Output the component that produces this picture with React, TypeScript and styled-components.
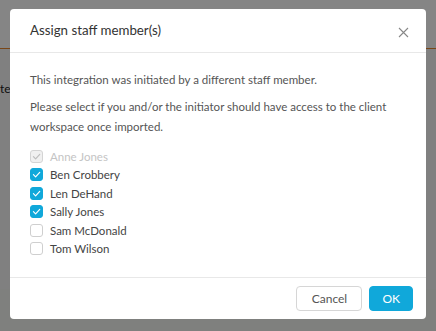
import React, { useState } from "react";
import styled, { createGlobalStyle } from "styled-components";

const Global = createGlobalStyle`
  html, body { margin: 0; padding: 0; }
  body { font-family: Lato, "Noto Sans", sans-serif; background: #fff; width: 436px; height: 331px; overflow: hidden; }
`;

const Page = styled.div`
  position: relative;
  width: 436px;
  height: 331px;
  background: #f6f6f6;
  overflow: hidden;
`;

const PageHeader = styled.div`
  height: 48px;
  background: #fff;
  border-bottom: 1px solid #e8862c;
`;

const PageText = styled.div`
  padding: 32px 0 0 0;
  font-size: 12px;
  color: #222;
`;

const PageFooter = styled.div`
  position: absolute;
  left: 0;
  right: 0;
  bottom: 0;
  height: 42px;
  background: #f4f6f2;
`;

const Overlay = styled.div`
  position: absolute;
  inset: 0;
  background: rgba(0, 0, 0, 0.48);
  display: flex;
  justify-content: center;
  align-items: flex-start;
  padding-top: 9px;
`;

const Modal = styled.div`
  width: 416px;
  background: #fff;
  border-radius: 4px;
  display: flex;
  flex-direction: column;
`;

const Header = styled.div`
  height: 43px;
  display: flex;
  align-items: center;
  justify-content: space-between;
  padding: 0 16px 0 20px;
  border-bottom: 1px solid #e8e8e8;
`;

const Title = styled.h2`
  margin: 0;
  margin-top: -2px;
  font-size: 13.3px;
  font-weight: 400;
  color: #333;
`;

const Close = styled.button`
  border: 0;
  background: none;
  padding: 0;
  margin-top: 4px;
  width: 14px;
  height: 14px;
  display: flex;
  align-items: center;
  justify-content: center;
  cursor: pointer;
`;

const Body = styled.div`
  padding: 17px 20px 19px 20px;
  border-bottom: 1px solid #e8e8e8;
`;

const Para = styled.p<{ $gap?: number }>`
  margin: 0 0 ${(p) => p.$gap ?? 0}px 0;
  font-size: 11.5px;
  line-height: 20px;
  color: #555;
`;

const List = styled.div`
  display: flex;
  flex-direction: column;
  margin-top: 10px;
`;

const Row = styled.label<{ $disabled?: boolean }>`
  display: flex;
  align-items: center;
  gap: 7px;
  height: 18.5px;
  font-size: 11.5px;
  color: ${(p) => (p.$disabled ? "#c4c4c4" : "#444")};
  cursor: ${(p) => (p.$disabled ? "default" : "pointer")};
`;

const Box = styled.span<{ $checked: boolean; $disabled?: boolean }>`
  width: 13px;
  height: 13px;
  box-sizing: border-box;
  border-radius: 3px;
  display: flex;
  align-items: center;
  justify-content: center;
  border: 1px solid
    ${(p) => (p.$disabled ? "#d4d4d4" : p.$checked ? "#10a8da" : "#cfcfcf")};
  background: ${(p) => (p.$disabled ? "#f0f0f0" : p.$checked ? "#10a8da" : "#fff")};
`;

const Footer = styled.div`
  display: flex;
  justify-content: flex-end;
  gap: 7px;
  padding: 8px 13px 8px 20px;
`;

const Btn = styled.button<{ $primary?: boolean }>`
  height: 25px;
  box-sizing: border-box;
  border-radius: 4px;
  font-family: inherit;
  font-size: 12px;
  padding: 0 12px;
  border: 1px solid ${(p) => (p.$primary ? "#10a8da" : "#d6d6d6")};
  background: ${(p) => (p.$primary ? "#10a8da" : "#fff")};
  color: ${(p) => (p.$primary ? "#fff" : "#555")};
  min-width: ${(p) => (p.$primary ? "43px" : "66px")};
`;

const Check = ({ color }: { color: string }) => (
  <svg width="9" height="9" viewBox="0 0 10 10">
    <path d="M1.6 5.2 L4 7.6 L8.6 2.6" fill="none" stroke={color} strokeWidth="1.3" strokeLinecap="round" strokeLinejoin="round" />
  </svg>
);

const people = [
  { name: "Anne Jones", checked: true, disabled: true },
  { name: "Ben Crobbery", checked: true },
  { name: "Len DeHand", checked: true },
  { name: "Sally Jones", checked: true },
  { name: "Sam McDonald", checked: false },
  { name: "Tom Wilson", checked: false },
];

export default function App() {
  const [state, setState] = useState(people);
  const toggle = (i: number) =>
    setState((s) => s.map((p, j) => (j === i && !p.disabled ? { ...p, checked: !p.checked } : p)));
  return (
    <>
      <Global />
      <Page>
        <PageHeader />
        <PageText>ted</PageText>
        <PageFooter />
        <Overlay>
          <Modal>
            <Header>
              <Title>Assign staff member(s)</Title>
              <Close aria-label="Close">
                <svg width="11" height="11" viewBox="0 0 11 11">
                  <path d="M1 1 L10 10 M10 1 L1 10" stroke="#888" strokeWidth="1.1" />
                </svg>
              </Close>
            </Header>
            <Body>
              <Para $gap={7}>This integration was initiated by a different staff member.</Para>
              <Para>
                Please select if you and/or the initiator should have access to the client workspace once imported.
              </Para>
              <List>
                {state.map((p, i) => (
                  <Row key={p.name} $disabled={p.disabled} onClick={() => toggle(i)}>
                    <Box $checked={p.checked} $disabled={p.disabled}>
                      {p.checked && <Check color={p.disabled ? "#bdbdbd" : "#fff"} />}
                    </Box>
                    {p.name}
                  </Row>
                ))}
              </List>
            </Body>
            <Footer>
              <Btn>Cancel</Btn>
              <Btn $primary>OK</Btn>
            </Footer>
          </Modal>
        </Overlay>
      </Page>
    </>
  );
}
